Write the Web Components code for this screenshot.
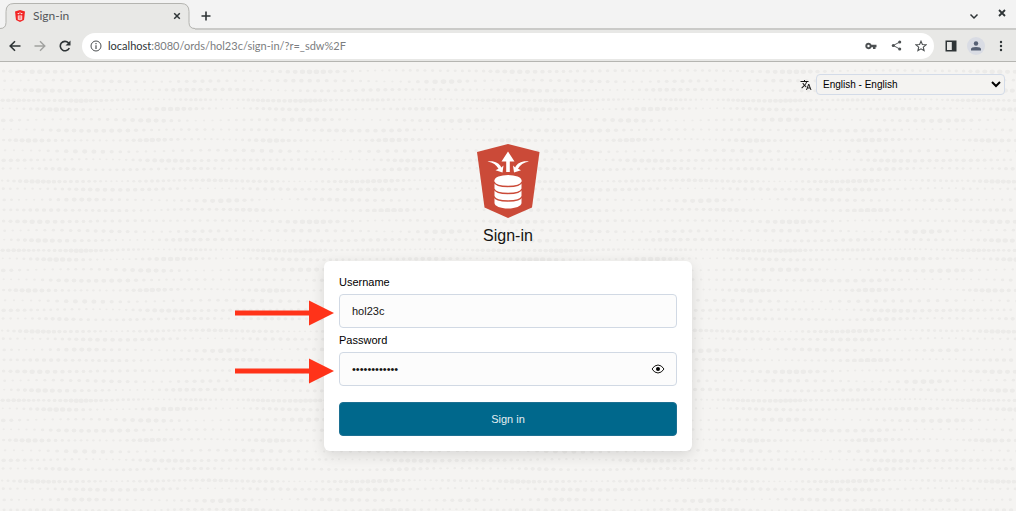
<!DOCTYPE html>
<html lang="en">
<head>
<meta charset="utf-8">
<meta name="viewport" content="width=device-width, initial-scale=1">
<title>Sign-in</title>
<style>
html, body { margin: 0; height: 100%; }
body { font-family: "Liberation Sans", Arial, sans-serif; color: #161513; background: #f5f4f2; }
</style>
</head>
<body>
<app-window></app-window>
<script>
const define = (name, html, setup) => {
  const template = document.createElement('template');
  template.innerHTML = html;
  customElements.define(name, class extends HTMLElement {
    constructor() {
      super();
      this.attachShadow({ mode: 'open' }).append(template.content.cloneNode(true));
    }
    connectedCallback() { if (setup) setup(this, this.shadowRoot); }
  });
};

define('browser-tabs', `
<style>
:host { display: flex; align-items: stretch; height: 28px; background: #f3f3f3; border-bottom: 2px solid #cacac8; }
.tab { position: relative; display: flex; align-items: center; gap: 7px; width: 183px; margin-left: 6px; padding: 4px 0 0 8px; box-sizing: border-box; font: 12px/16px Lato, "Noto Sans", sans-serif; color: #53565a; }
.shape { left: -6px; top: 3px; width: 196px; height: 27px; }
.tab > * { position: relative; }
.tab > .shape { position: absolute; }
.name { flex: 1; }
button { border: 0; padding: 0; background: none; display: grid; place-items: center; width: 16px; height: 16px; color: #2e3436; }
.tab button { margin-right: 4px; }
.new { margin: 8px 0 0 9px; }
.end { margin-left: auto; display: flex; gap: 12px; padding: 8px 6px 0 0; }
.end button:last-child { margin-top: -3px; }
</style>
<div class="tab">
  <svg class="shape" viewBox="0 0 196 27"><path d="M0 27V25.500Q6 25.500 6 19.500V8.500Q6 .5 14 .5H181Q189 .5 189 8.500V19.500Q189 25.500 195 25.500V27Z" fill="#e8e8e6"/><path d="M0 25.500Q6 25.500 6 19.500V8.500Q6 .5 14 .5H181Q189 .5 189 8.500V19.500Q189 25.500 195 25.500" fill="none" stroke="#b4b4b0"/></svg>
  <svg width="12" height="12" viewBox="0 0 12 12"><path d="M1 1.500 6 0l5 1.500-1 8.500-4 2-4-2z" fill="#f22525"/><path d="M3 3l2 1.500L6 1.500l1 3L9 3M3.800 5.500h4.400v4Q6 11 3.800 9.500z" fill="#fbeaea"/><path d="M5.200 6v3.500M6.800 6v3.500" stroke="#f22525" stroke-width=".6"/></svg>
  <span class="name">Sign-in</span>
  <button aria-label="Close tab"><svg width="8" height="8" viewBox="0 0 8 8"><path d="M1.200 1.200l5.600 5.600M6.800 1.200 1.200 6.800" stroke="currentColor" stroke-width="1.500"/></svg></button>
</div>
<button class="new" aria-label="New tab"><svg width="10" height="10" viewBox="0 0 10 10"><path d="M5 .5v9M.5 5h9" stroke="currentColor" stroke-width="1.600"/></svg></button>
<div class="end">
  <button aria-label="Search tabs"><svg width="10" height="8" viewBox="0 0 10 8"><path d="M1.500 2.500 5 6l3.500-3.500" fill="none" stroke="currentColor" stroke-width="1.500"/></svg></button>
  <button aria-label="Close window"><svg width="8" height="8" viewBox="0 0 8 8"><path d="M1 1l6 6M7 1 1 7" stroke="currentColor" stroke-width="1.800"/></svg></button>
</div>`);

define('browser-toolbar', `
<style>
:host { display: flex; align-items: center; height: 31px; background: #e8e8e6; border-bottom: 1px solid #b5b5b1; padding: 0 6px; }
button { border: 0; padding: 0; background: none; display: grid; place-items: center; width: 18px; height: 18px; color: #2e3436; flex: none; }
.nav { display: flex; gap: 7px; }
.address { flex: 1; display: flex; align-items: center; height: 26px; margin: 0 8px; border-radius: 13px; background: #fff; padding: 0 4px 0 5px; }
.url { flex: 1; min-width: 0; margin-left: 3px; white-space: nowrap; font: 11px/16px Lato, "Noto Sans", sans-serif; color: #7b7d80; }
.url b { font-weight: 400; color: #2e3436; }
.address button { color: #4c5052; }
.address .act { margin-left: 7px; }
.end { display: flex; gap: 7px; }
.person { background: #d9dce4; border-radius: 50%; }
</style>
<div class="nav">
  <button aria-label="Back"><svg width="12" height="12" viewBox="0 0 12 12"><path d="M11.500 6H1.500M6 1.200 1.200 6 6 10.800" fill="none" stroke="currentColor" stroke-width="1.600"/></svg></button>
  <button aria-label="Forward" style="color:#a0a19f"><svg width="12" height="12" viewBox="0 0 12 12"><path d="M.5 6h10M6 1.200 10.800 6 6 10.800" fill="none" stroke="currentColor" stroke-width="1.400"/></svg></button>
  <button aria-label="Reload"><svg width="12" height="12" viewBox="0 0 12 12"><path d="M10.300 8A4.700 4.700 0 1 1 9.400 2.800L10.500 4" fill="none" stroke="currentColor" stroke-width="1.600"/><path d="M11.500.5v5h-5z" fill="currentColor"/></svg></button>
</div>
<div class="address">
  <button aria-label="Site information"><svg width="12" height="12" viewBox="0 0 12 12"><circle cx="6" cy="6" r="5" fill="none" stroke="currentColor"/><path d="M6 5.200V9M6 3v1.200" stroke="currentColor" stroke-width="1.200"/></svg></button>
  <span class="url"><b>localhost</b>:8080/ords/hol23c/sign-in/?r=_sdw%2F</span>
  <button class="act" aria-label="Passwords"><svg width="12" height="8" viewBox="0 0 12 8"><path fill-rule="evenodd" d="M3.500.8A3.200 3.200 0 1 0 6.500 5.200H8V7h2.500V5.200h1V2.800H6.500A3.200 3.200 0 0 0 3.500.8zM3.500 2.800A1.200 1.200 0 1 1 3.500 5.200 1.200 1.200 0 0 1 3.500 2.800z" fill="currentColor"/></svg></button>
  <button class="act" aria-label="Share"><svg width="11" height="11" viewBox="0 0 12 12"><path d="M9.500 2.200 2.500 6l7 3.800" fill="none" stroke="currentColor"/><g fill="currentColor"><circle cx="9.500" cy="2.200" r="1.700"/><circle cx="2.500" cy="6" r="1.700"/><circle cx="9.500" cy="9.800" r="1.700"/></g></svg></button>
  <button class="act" aria-label="Bookmark"><svg width="12" height="12" viewBox="0 0 12 12"><path d="M6 1.200l1.400 3.300 3.600.3-2.700 2.400.8 3.500L6 8.800l-3.100 1.900.8-3.500L1 4.800l3.600-.3z" fill="none" stroke="currentColor" stroke-width="1.100"/></svg></button>
</div>
<div class="end">
  <button aria-label="Side panel"><svg width="12" height="12" viewBox="0 0 12 12"><path fill-rule="evenodd" d="M.5.5h11v11H.5zM2 2v8h4.800V2z" fill="currentColor"/></svg></button>
  <button class="person" aria-label="Profile"><svg width="10" height="10" viewBox="0 0 10 10"><circle cx="5" cy="2.500" r="2.200" fill="#566074"/><path d="M0 9.500V8Q0 6 5 6t5 2v1.500z" fill="#566074"/></svg></button>
  <button aria-label="Menu"><svg width="4" height="12" viewBox="0 0 4 12" fill="currentColor"><circle cx="2" cy="2" r="1.200"/><circle cx="2" cy="6" r="1.200"/><circle cx="2" cy="10" r="1.200"/></svg></button>
</div>`);

define('dotted-backdrop', `
<style>
:host { display: block; position: relative; overflow: hidden; background: #f5f4f2; }
svg { position: absolute; inset: 0; width: 100%; height: 100%; }
.content { position: relative; }
</style>
<svg aria-hidden="true"><defs><pattern id="dots" width="480" height="150" patternUnits="userSpaceOnUse"></pattern></defs><rect width="100%" height="100%" fill="url(#dots)"/></svg>
<div class="content"><slot></slot></div>`, (host, root) => {
  const rows = [9, 19, 28, 38, 47, 58, 68, 78, 89, 98, 107, 119, 127, 138, 148];
  const counts = [66, 58, 68, 92, 72, 60, 62, 74, 54, 70, 68, 84, 66, 62, 70];
  let marks = '';
  rows.forEach((y, r) => {
    const step = 480 / counts[r];
    const phase = (r * r * 2.37 + r * 1.3) % 6.28;
    for (let i = 0; i < counts[r]; i++) {
      const t = i / counts[r] * Math.PI * 2;
      const wave = Math.sin(t * (2 + r * 2 % 3) + phase) + Math.sin(t * (5 + r % 4) + phase * 3) * .5;
      const noise = Math.sin(i * 12.9 + r * 78.2) * .25;
      const size = Math.max(.9, 1.5 + wave * .4 + noise);
      const x = step * (i + .5) + Math.sin(i * 5.7 + r) * .7;
      const cy = y + Math.sin(t * 2 + phase) * .6 + noise;
      marks += `<ellipse cx="${x.toFixed(1)}" cy="${cy.toFixed(1)}" rx="${(size * 1.2).toFixed(2)}" ry="${size.toFixed(2)}" fill="#ecebe9"/>`;
    }
  });
  root.querySelector('pattern').innerHTML = marks;
});

define('language-picker', `
<style>
:host { display: flex; justify-content: flex-end; align-items: center; gap: 4px; padding: 12px 11px 0; }
select { width: 189px; height: 21px; box-sizing: border-box; border: 1px solid #d3dbe8; border-radius: 4px; background: #f4f3f1; padding: 0 2px; font: 10px "Liberation Sans", Arial, sans-serif; color: #000; }
label { display: flex; }
</style>
<label for="language" aria-label="Language"><svg width="12" height="12" viewBox="0 0 24 24"><path d="M12.870 15.070l-2.540-2.510.030-.030A17.520 17.520 0 0 0 14.070 6H17V4h-7V2H8v2H1v2h11.170C11.500 7.920 10.440 9.750 9 11.350 8.070 10.320 7.300 9.190 6.690 8h-2c.730 1.630 1.730 3.170 2.980 4.560l-5.090 5.020L4 19l5-5 3.110 3.110zM18.500 10h-2L12 22h2l1.120-3h4.750L21 22h2zm-2.620 7l1.620-4.330L19.120 17z" fill="#161513"/></svg></label>
<select id="language"><option>English - English</option></select>`);

define('product-logo', `
<style>:host { display: block; } svg { display: block; }</style>
<svg width="64" height="74" viewBox="0 0 64 74" role="img" aria-label="Database Actions">
  <path d="M32 0 63.500 8 56 63.500 32 74 8.500 63.500 1 8z" fill="#cb4a38"/>
  <g fill="#fff"><path d="M32 7.500 38.500 17.500H33.800V28H30.200V17.500H25.500z"/>
  <path d="M11.500 17.500C18 16.500 23.500 19 25.300 23.500L27.500 21.500 26.500 28.500 19.500 26.200 22.500 24.800C20.500 21 17 18.500 11.500 17.500zM53 17.500C46.500 16.500 41 19 39.200 23.500L37 21.500 38 28.500 45 26.200 42 24.800C44 21 47.500 18.500 53 17.500z"/>
  <path d="M18.500 36.500V59C18.500 62 24.500 64.500 32 64.500S45.500 62 45.500 59V36.500z"/><ellipse cx="32" cy="36.500" rx="13.500" ry="5.500"/></g>
  <path d="M18 38C20 44 44 44 46 38M18 45C20 51 44 51 46 45M18 52.500C20 58.500 44 58.500 46 52.500" fill="none" stroke="#cb4a38" stroke-width="1.300"/>
</svg>`);

define('pointer-arrow', `
<style>:host { display: block; position: absolute; right: calc(100% + 5px); pointer-events: none; } svg { display: block; }</style>
<svg width="99" height="26" viewBox="0 0 99 26"><path d="M0 10.500H74V.5L99 13 74 25.500V15.500H0z" fill="#ff3319"/></svg>`);

define('text-field', `
<style>
:host { display: block; }
label { display: block; font-size: 11px; line-height: 14px; margin-bottom: 5px; color: #000; }
.box { position: relative; display: flex; }
input { flex: 1; min-width: 0; box-sizing: border-box; height: 34px; border: 1px solid #d1d9e4; border-radius: 4px; background: #fcfcfc; padding: 0 12px; font: 11px "Liberation Sans", Arial, sans-serif; color: #161513; }
button { position: absolute; right: 12px; top: 10px; width: 14px; height: 14px; padding: 0; border: 0; background: none; }
button svg { display: block; }
:host([type="text"]) button { display: none; }
</style>
<label for="field"></label>
<div class="box"><input id="field">
  <button type="button" aria-label="Show password"><svg width="14" height="14" viewBox="0 0 14 14"><path d="M1 7Q3.500 3 7 3t6 4Q10.500 11 7 11T1 7z" fill="none" stroke="#161513"/><circle cx="7" cy="7" r="2" fill="#000"/></svg></button>
  <slot></slot>
</div>`, (host, root) => {
  const input = root.querySelector('input');
  root.querySelector('label').textContent = host.getAttribute('label');
  input.type = host.getAttribute('type');
  input.value = host.getAttribute('value');
});

define('sign-in-form', `
<style>
:host { display: flex; flex-direction: column; align-items: center; padding: 49px 15px 60px; }
h1 { margin: 8px 0 15px; font-size: 16px; line-height: 20px; font-weight: 400; color: #161513; }
form { width: 100%; max-width: 368px; box-sizing: border-box; padding: 14px 15px 15px; border-radius: 6px; background: #fff; box-shadow: 0 4px 14px rgba(0,0,0,.12); display: flex; flex-direction: column; gap: 5px; }
.submit { height: 34px; margin-top: 11px; border: 1px solid #1c7092; border-radius: 4px; background: #00688c; color: #e3eef2; font: 11px "Liberation Sans", Arial, sans-serif; }
pointer-arrow { top: 6px; }
</style>
<product-logo></product-logo>
<h1>Sign-in</h1>
<form>
  <text-field label="Username" type="text" value="hol23c"><pointer-arrow></pointer-arrow></text-field>
  <text-field label="Password" type="password" value="abcdefghijkl"><pointer-arrow></pointer-arrow></text-field>
  <button class="submit" type="button">Sign in</button>
</form>`);

define('app-window', `
<style>
:host { display: flex; flex-direction: column; min-height: 100%; }
dotted-backdrop { flex: 1; }
</style>
<browser-tabs></browser-tabs>
<browser-toolbar></browser-toolbar>
<dotted-backdrop><language-picker></language-picker><sign-in-form></sign-in-form></dotted-backdrop>`);
</script>
</body>
</html>
